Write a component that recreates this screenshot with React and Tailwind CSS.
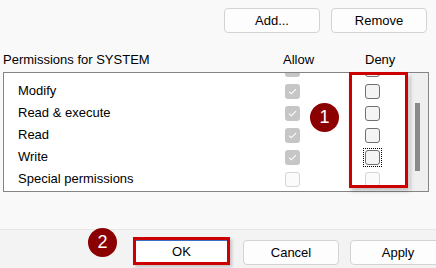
import React from "react";

const rows = [
  { name: "Full control", allow: true },
  { name: "Modify", allow: true },
  { name: "Read & execute", allow: true },
  { name: "Read", allow: true },
  { name: "Write", allow: true, focus: true },
  { name: "Special permissions", allow: false, special: true },
];

function AllowBox({ checked }) {
  if (!checked) {
    return <div className="h-[15px] w-[15px] rounded-[3px] border border-[#d6d6d6] bg-[#fbfbfb]" />;
  }
  return (
    <div className="flex h-[15px] w-[15px] items-center justify-center rounded-[3px] bg-[#c6c6c6]">
      <svg width="9" height="7" viewBox="0 0 9 7" fill="none">
        <path d="M1 3.6 L3.3 5.8 L8 1.2" stroke="white" strokeWidth="1.1" />
      </svg>
    </div>
  );
}

function DenyBox({ faded, focus }) {
  const box = faded ? (
    <div className="h-[15px] w-[15px] rounded-[3px] border border-[#d6d6d6] bg-[#fbfbfb]" />
  ) : (
    <div className="h-[15px] w-[15px] rounded-[3px] border border-[#707070] bg-[#f4f4f4]" />
  );
  if (!focus) return box;
  return <div className="-m-[2px] border border-dotted border-black p-[1px]">{box}</div>;
}

function Btn({ children, className = "" }) {
  return (
    <div
      className={
        "flex h-[25px] w-[96px] shrink-0 items-center justify-center rounded-[4px] border border-[#d3d3d3] bg-[#fdfdfd] text-[13px] text-black " +
        className
      }
    >
      {children}
    </div>
  );
}

function Badge({ n, className = "" }) {
  return (
    <div
      className={
        "absolute flex h-[29px] w-[29px] items-center justify-center rounded-full bg-[#8b0000] text-[18px] text-white " +
        className
      }
    >
      {n}
    </div>
  );
}

export default function App() {
  return (
    <div
      className="flex h-[268px] w-[436px] flex-col overflow-hidden bg-[#f9f9f9] text-black"
      style={{ fontFamily: '"Liberation Sans", Arial, sans-serif' }}
    >
      <div className="h-[229px] shrink-0">
        <div className="flex justify-end gap-[11px] pr-[9px] pt-[8px]">
          <Btn>Add...</Btn>
          <Btn>Remove</Btn>
        </div>
        <div className="mt-[17px] flex h-[20px] items-center pl-[3px] text-[13px]">
          <div className="w-[280px]">Permissions for SYSTEM</div>
          <div className="w-[82px]">Allow</div>
          <div>Deny</div>
        </div>
        <div className="relative ml-[3px] mt-[2px] w-[426px]">
          <div className="flex h-[120px] overflow-hidden border border-[#858585] bg-white">
            <div className="-mt-[15px] flex-1">
              {rows.map((r) => (
                <div key={r.name} className="flex h-[22px] items-center text-[13px]">
                  <div className="w-[281px] pl-[14px]">{r.name}</div>
                  <div className="w-[80px]">
                    <AllowBox checked={r.allow} />
                  </div>
                  <div>
                    <DenyBox faded={r.special} focus={r.focus} />
                  </div>
                </div>
              ))}
            </div>
            <div className="w-[18px] shrink-0 bg-[#efefef] pl-[5px] pt-[30px]">
              <div className="h-[68px] w-[5px] bg-[#8a8a8a]" />
            </div>
          </div>
          <div className="absolute left-[346px] top-0 h-[116px] w-[59px] border-[3px] border-[#cc0000] shadow-[2px_3px_4px_rgba(0,0,0,0.25)]" />
          <Badge n="1" className="left-[307px] top-[31px]" />
        </div>
      </div>
      <div className="relative flex flex-1 items-start border-t border-[#e6e6e6] bg-[#f3f3f3] pl-[133px] pt-[7px]">
        <div className="flex h-[28px] w-[97px] shrink-0 items-center justify-center border-[3px] border-[#cc0000] bg-white text-[13px] shadow-[2px_2px_3px_rgba(0,0,0,0.2)]">
          <span className="flex h-full w-full items-center justify-center border-t border-[#3b6fc4]">OK</span>
        </div>
        <Btn className="ml-[13px] mt-[3px]">Cancel</Btn>
        <Btn className="ml-[11px] mt-[3px]">Apply</Btn>
        <Badge n="2" className="left-[88px] top-[-2px]" />
      </div>
    </div>
  );
}
